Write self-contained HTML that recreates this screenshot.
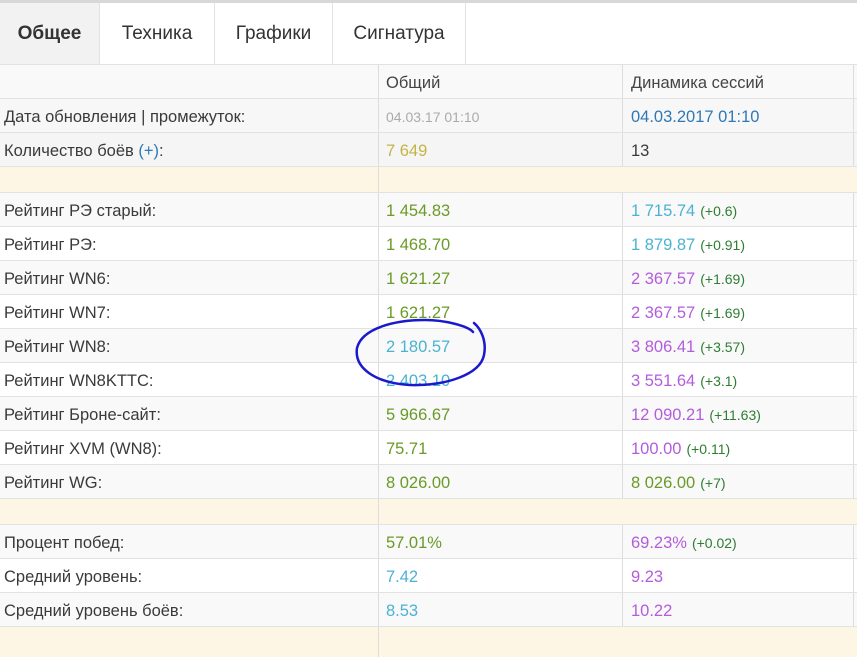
<!DOCTYPE html>
<html><head><meta charset="utf-8"><style>
*{margin:0;padding:0;box-sizing:border-box}
body{width:857px;height:652px;overflow:hidden;background:#fff;font-family:"Liberation Sans",sans-serif;color:#3a3a3a;position:relative}
.top{position:absolute;left:0;top:0;width:857px;height:3px;background:#d8d8d8}
.tab{position:absolute;top:3px;height:62px;line-height:62px;font-size:19px;text-align:center;border-right:1px solid #e2e2e2;border-bottom:1px solid #e2e2e2;background:#fff;color:#333}
.row{position:absolute;left:0;width:857px;border-bottom:1px solid #e2e2e2;font-size:16.5px}
.row div{position:absolute;top:0;height:100%;display:flex;align-items:center;padding-top:3px}
.c1{left:4px}
.c2{left:378px;width:244px;padding-left:7px;border-left:1px solid #ddd}
.c3{left:622px;width:232px;padding-left:8px;border-left:1px solid #ddd;border-right:1px solid #ddd}
.y{background:#fdf6e4}
.g{color:#6a9a28}.b{color:#4ab3d2}.p{color:#b35ddb}.o{color:#c4b444}.bl{color:#2f78b7}
.d{color:#2e7d32;font-size:14px;margin-left:5px}
</style></head><body>
<div class="top"></div>
<div class="tab" style="left:0;width:100px;background:#f2f2f2;font-weight:bold">Общее</div>
<div class="tab" style="left:100px;width:115px">Техника</div>
<div class="tab" style="left:215px;width:118px">Графики</div>
<div class="tab" style="left:333px;width:133px">Сигнатура</div>
<div class="tab" style="left:466px;width:391px;border-right:none"></div>

<div class="row" style="top:65px;height:34px;background:#f9f9f9"><div class="c2" style="color:#444">Общий</div><div class="c3" style="color:#444">Динамика сессий</div></div>
<div class="row" style="top:99px;height:34px;background:#f7f7f7"><div class="c1">Дата обновления | промежуток:</div><div class="c2" style="color:#aaa;font-size:14px">04.03.17 01:10</div><div class="c3 bl">04.03.2017 01:10</div></div>
<div class="row" style="top:133px;height:34px;background:#f5f5f5"><div class="c1">Количество боёв&nbsp;<span class="bl">(+)</span>:</div><div class="c2 o">7 649</div><div class="c3">13</div></div>
<div class="row y" style="top:167px;height:26px"><div class="c2" style="border-right:none"></div></div>
<div class="row" style="top:193px;height:34px;background:#f9f9f9"><div class="c1">Рейтинг РЭ старый:</div><div class="c2 g">1 454.83</div><div class="c3"><span class="b">1 715.74</span><span class="d">(+0.6)</span></div></div>
<div class="row" style="top:227px;height:34px;background:#fff"><div class="c1">Рейтинг РЭ:</div><div class="c2 g">1 468.70</div><div class="c3"><span class="b">1 879.87</span><span class="d">(+0.91)</span></div></div>
<div class="row" style="top:261px;height:34px;background:#f9f9f9"><div class="c1">Рейтинг WN6:</div><div class="c2 g">1 621.27</div><div class="c3"><span class="p">2 367.57</span><span class="d">(+1.69)</span></div></div>
<div class="row" style="top:295px;height:34px;background:#fff"><div class="c1">Рейтинг WN7:</div><div class="c2 g">1 621.27</div><div class="c3"><span class="p">2 367.57</span><span class="d">(+1.69)</span></div></div>
<div class="row" style="top:329px;height:34px;background:#f9f9f9"><div class="c1">Рейтинг WN8:</div><div class="c2 b">2 180.57</div><div class="c3"><span class="p">3 806.41</span><span class="d">(+3.57)</span></div></div>
<div class="row" style="top:363px;height:34px;background:#fff"><div class="c1">Рейтинг WN8KTTC:</div><div class="c2 b">2 403.10</div><div class="c3"><span class="p">3 551.64</span><span class="d">(+3.1)</span></div></div>
<div class="row" style="top:397px;height:34px;background:#f9f9f9"><div class="c1">Рейтинг Броне-сайт:</div><div class="c2 g">5 966.67</div><div class="c3"><span class="p">12 090.21</span><span class="d">(+11.63)</span></div></div>
<div class="row" style="top:431px;height:34px;background:#fff"><div class="c1">Рейтинг XVM (WN8):</div><div class="c2 g">75.71</div><div class="c3"><span class="p">100.00</span><span class="d">(+0.11)</span></div></div>
<div class="row" style="top:465px;height:34px;background:#f9f9f9"><div class="c1">Рейтинг WG:</div><div class="c2 g">8 026.00</div><div class="c3"><span class="g">8 026.00</span><span class="d">(+7)</span></div></div>
<div class="row y" style="top:499px;height:26px"><div class="c2" style="border-right:none"></div></div>
<div class="row" style="top:525px;height:34px;background:#f9f9f9"><div class="c1">Процент побед:</div><div class="c2 g">57.01%</div><div class="c3"><span class="p">69.23%</span><span class="d">(+0.02)</span></div></div>
<div class="row" style="top:559px;height:34px;background:#fff"><div class="c1">Средний уровень:</div><div class="c2 b">7.42</div><div class="c3 p">9.23</div></div>
<div class="row" style="top:593px;height:34px;background:#f9f9f9"><div class="c1">Средний уровень боёв:</div><div class="c2 b">8.53</div><div class="c3 p">10.22</div></div>
<div class="row y" style="top:627px;height:30px;border-bottom:none"><div class="c2" style="border-right:none"></div></div>

<svg style="position:absolute;left:0;top:0" width="857" height="652"><path d="M473,332 C468,326 445,320 425,320 C395,320 362,328 357,348 C354,368 375,383 410,385 C445,386 480,375 484,355 C487,340 480,328 474,323" fill="none" stroke="#1a1acc" stroke-width="2.5" stroke-linecap="round"/></svg>
</body></html>
